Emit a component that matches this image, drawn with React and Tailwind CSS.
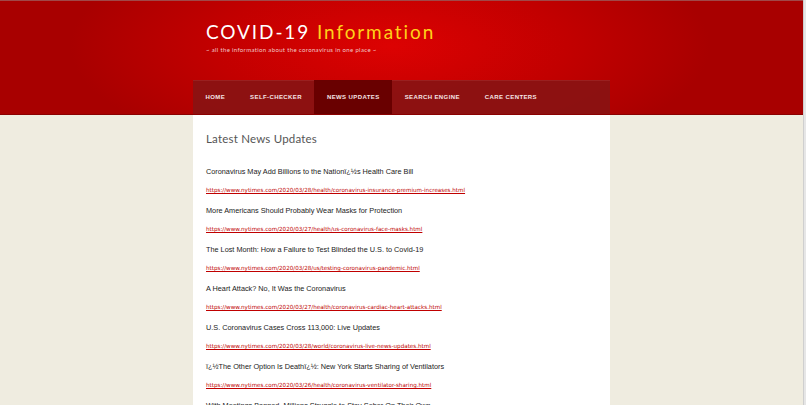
import React from "react";

const items = [
  ["Coronavirus May Add Billions to the Nation\u00ef\u00bf\u00bds Health Care Bill", "https://www.nytimes.com/2020/03/28/health/coronavirus-insurance-premium-increases.html"],
  ["More Americans Should Probably Wear Masks for Protection", "https://www.nytimes.com/2020/03/27/health/us-coronavirus-face-masks.html"],
  ["The Lost Month: How a Failure to Test Blinded the U.S. to Covid-19", "https://www.nytimes.com/2020/03/28/us/testing-coronavirus-pandemic.html"],
  ["A Heart Attack? No, It Was the Coronavirus", "https://www.nytimes.com/2020/03/27/health/coronavirus-cardiac-heart-attacks.html"],
  ["U.S. Coronavirus Cases Cross 113,000: Live Updates", "https://www.nytimes.com/2020/03/28/world/coronavirus-live-news-updates.html"],
  ["\u00ef\u00bf\u00bdThe Other Option Is Death\u00ef\u00bf\u00bd: New York Starts Sharing of Ventilators", "https://www.nytimes.com/2020/03/26/health/coronavirus-ventilator-sharing.html"],
  ["With Meetings Banned, Millions Struggle to Stay Sober On Their Own", "https://www.nytimes.com/"],
];

const nav = ["HOME", "SELF-CHECKER", "NEWS UPDATES", "SEARCH ENGINE", "CARE CENTERS"];

export default function App() {
  return (
    <div className="w-[806px] h-[405px] overflow-hidden flex bg-[#efece0]">
      <div className="w-[803px] flex flex-col">
        <header className="h-[115px] shrink-0 border-t border-[#a04848] border-b border-b-[#8a0000] bg-[radial-gradient(ellipse_320px_120px_at_390px_45px,#dc0202_0%,#c20000_55%,#a80000_100%)] flex flex-col">
          <div className="ml-[193px] w-[417px] flex flex-col flex-1">
            <div className="pl-[13px] pt-[19px]">
              <div className="text-[19px] leading-[24px] tracking-[1.9px] text-white font-['Lato',sans-serif] whitespace-nowrap">
                COVID-19 <span className="text-[#ffd21a]">Information</span>
              </div>
              <div className="mt-[2px] text-[6px] leading-[8px] text-[#f2c8c8] font-['Lato',sans-serif] tracking-[0.35px] whitespace-nowrap">
                ~ all the information about the coronavirus in one place ~
              </div>
            </div>
            <nav className="mt-auto h-[34px] flex bg-[#8a1212]/95 shadow-[inset_0_1px_0_#9a2020]">
              {nav.map((n) => (
                <div
                  key={n}
                  className={
                    "h-full flex items-center px-[12.5px] text-[6px] font-bold tracking-[0.4px] text-[#f6e6e6] whitespace-nowrap font-['Liberation_Sans',sans-serif] " +
                    (n === "NEWS UPDATES" ? "bg-[#690000]" : "")
                  }
                >
                  {n}
                </div>
              ))}
            </nav>
          </div>
        </header>
        <main className="ml-[193px] w-[417px] flex-1 bg-white px-[13px] pt-[17px]">
          <h1 className="text-[11.5px] leading-[14px] text-[#555] font-['Lato',sans-serif] tracking-[0.2px]">
            Latest News Updates
          </h1>
          <div className="mt-[21px] flex flex-col gap-[12px]">
            {items.map(([t, u]) => (
              <div key={t} className="flex flex-col">
                <div className="text-[7.3px] leading-[9px] text-[#222] whitespace-nowrap font-['Liberation_Sans',sans-serif]">{t}</div>
                <a className="mt-[11px] text-[5.6px] leading-[7px] text-[#c00000] underline whitespace-nowrap font-['DejaVu_Sans',sans-serif]" href="#">
                  {u}
                </a>
              </div>
            ))}
          </div>
        </main>
      </div>
      <div className="w-[3px] bg-[#e6e6e6] border-l border-[#cfcfcf]" />
    </div>
  );
}
